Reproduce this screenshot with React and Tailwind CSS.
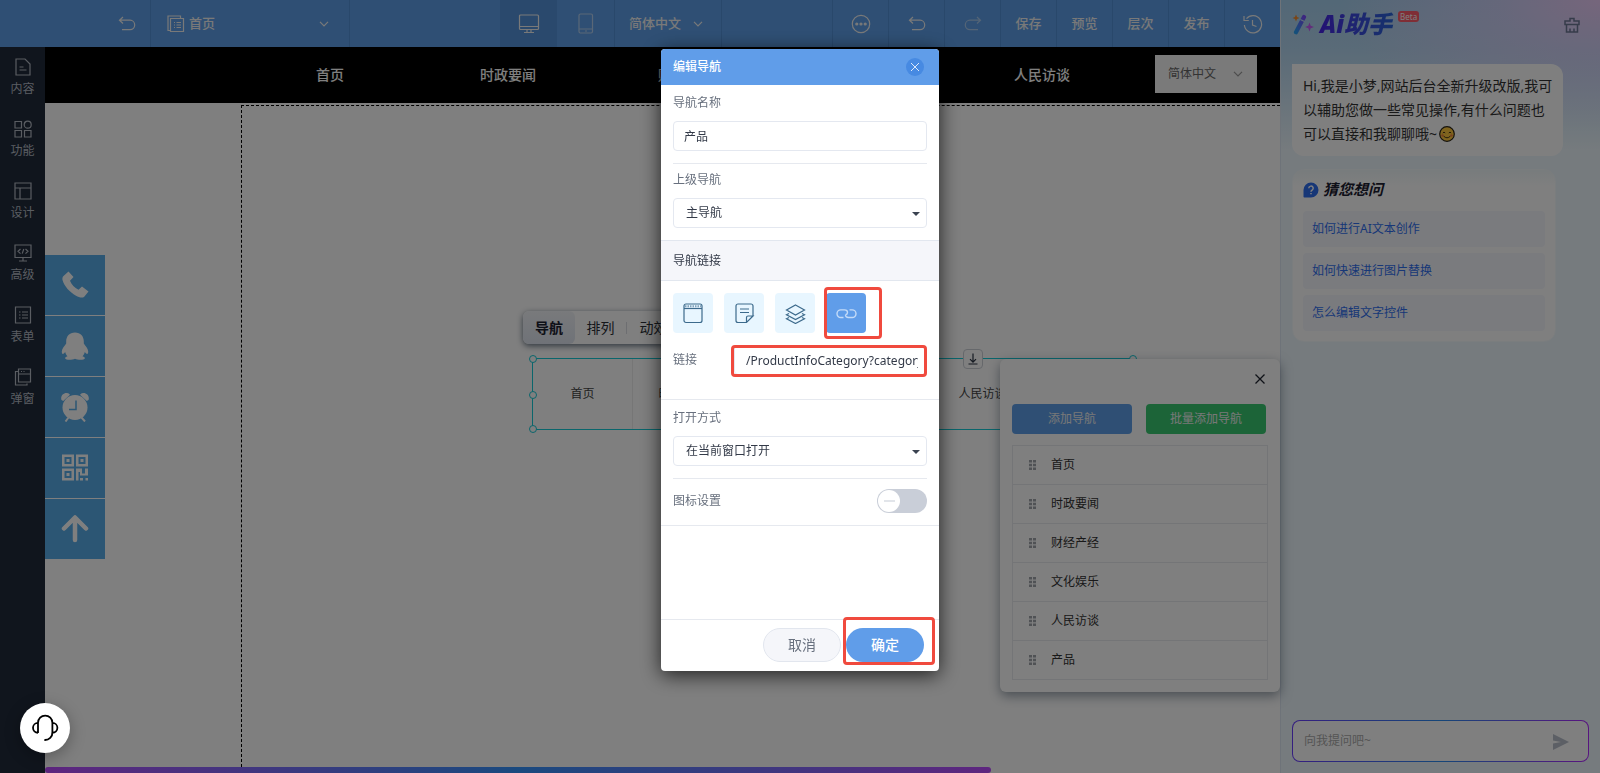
import { useState } from "react";
import clsx from "clsx";

const NAV_ITEMS = ["首页", "时政要闻", "财经产经", "文化娱乐", "人民访谈", "产品"];

const SIDE_ITEMS = [
  { label: "内容", icon: <path d="M2 1h9l5 5v11H2zM5.5 9h4M5.5 12h7" /> },
  { label: "功能", icon: <><path d="M1 1.5h6.5V8H1zM1 10.5h6.5V17H1zM10.5 10.5H17V17h-6.5z" /><circle cx="13.7" cy="4.7" r="3.5" /></> },
  { label: "设计", icon: <path d="M1 1h16v16H1zM1 6h16M6 6v11" /> },
  { label: "高级", icon: <path d="M1 1h16v12.5H1zM9 13.5V17M5 17h8M6.5 5 4 7.3l2.5 2.3M11.5 5 14 7.3l-2.5 2.3M9.8 5l-1.6 4.6" /> },
  { label: "表单", icon: <path d="M1.5 1h15v16h-15zM5 6h1.5M8 6h6M5 9h1.5M8 9h6M5 12h1.5M8 12h6" /> },
  { label: "弹窗", icon: <path d="M4.5 1h12v13h-12zM4.5 6h12M7 3.5h1M9.5 3.5h1M4 3.5H1.5V17H13v-1.5" /> },
];

const QUESTIONS = ["如何进行AI文本创作", "如何快速进行图片替换", "怎么编辑文字控件"];

function Icon({ size = 18, box = "0 0 18 18", className, children }) {
  return (
    <svg width={size} height={size} viewBox={box} fill="none" stroke="currentColor" strokeWidth="1.2" className={className} aria-hidden="true">
      {children}
    </svg>
  );
}

function Chevron({ className }) {
  return (
    <svg width="10" height="6" viewBox="0 0 10 6" fill="none" stroke="currentColor" strokeWidth="1.2" className={className} aria-hidden="true">
      <path d="M1 .8 5 4.8 9 .8" />
    </svg>
  );
}

const UNDO = <path d="M5 2 1.5 5.2 5 8.5M1.5 5.2H12a4.7 4.7 0 0 1 0 9.4H4" />;

function TopBar() {
  const cell = "w-14 h-full flex items-center justify-center border-r border-[#5290d6] text-[#f2f2f2]";
  return (
    <header className="h-[47px] shrink-0 flex bg-[#5e9fe8] text-[13px] font-medium text-[#f2f2f2]">
      <button aria-label="返回" className="w-[151px] flex items-center justify-end pr-3.5 border-r border-[#5290d6]"><Icon>{UNDO}</Icon></button>
      <label className="relative w-[199px] flex items-center border-r border-[#5290d6]">
        <Icon className="absolute left-4">
          <path d="M3.5 15.5H1V1h12.5v2M3.5 3.5h13v13h-13zM7 7.5h1M9.5 7.5H14M7 10h1M9.5 10H14M7 12.5h1M9.5 12.5H14" />
        </Icon>
        <select aria-label="页面" className="appearance-none w-full h-full bg-transparent pl-[38px] outline-none"><option>首页</option></select>
        <Chevron className="absolute right-5 pointer-events-none" />
      </label>

      <div className="flex ml-[150px]">
        <button aria-label="电脑" className="w-[57px] flex items-center justify-center bg-[#5593da]">
          <svg width="22" height="20" viewBox="0 0 22 20" fill="none" stroke="currentColor" strokeWidth="1.2">
            <rect x="1.5" y="1" width="19" height="14.5" rx="1" /><path d="M1.5 12.5h19M9 15.5V18M13 15.5V18M6 18.5h10" />
          </svg>
        </button>
        <button aria-label="手机" className="w-[58px] flex items-center justify-center border-r border-[#5290d6] text-[#b4cfee]">
          <svg width="16" height="21" viewBox="0 0 16 21" fill="none" stroke="currentColor" strokeWidth="1.2">
            <rect x="1" y="1" width="13.5" height="19" rx="1.5" /><path d="M1 16h13.5M7 18h2" />
          </svg>
        </button>
        <label className="relative w-[107px] flex items-center border-r border-[#5290d6]">
          <select aria-label="语言" className="appearance-none w-full h-full bg-transparent pl-3.5 outline-none"><option>简体中文</option></select>
          <Chevron className="absolute right-[18px] pointer-events-none" />
        </label>
      </div>

      <div className="flex ml-auto border-l border-[#5290d6]">
        <button aria-label="更多" className={cell}>
          <Icon size={20} box="0 0 20 20">
            <circle cx="10" cy="10" r="8.7" />
            <circle cx="5.8" cy="10" r="1" fill="currentColor" />
            <circle cx="10" cy="10" r="1" fill="currentColor" />
            <circle cx="14.2" cy="10" r="1" fill="currentColor" />
          </Icon>
        </button>
        <button aria-label="撤销" className={cell}><Icon>{UNDO}</Icon></button>
        <button aria-label="重做" className={cell}><Icon className="-scale-x-100 opacity-50">{UNDO}</Icon></button>
        {["保存", "预览", "层次", "发布"].map(t => <button key={t} className={cell}>{t}</button>)}
        <button aria-label="历史" className="w-[55px] flex items-center justify-center">
          <Icon size={20} box="0 0 20 20"><path d="M3.5 4.6A8.6 8.6 0 1 1 1.4 11M1 2v4.5h4.8M9.5 6v5l4 1.5" /></Icon>
        </button>
      </div>
    </header>
  );
}

function SideBar() {
  return (
    <nav className="w-[45px] shrink-0 bg-[#202a3a] text-[#b4bac4]">
      {SIDE_ITEMS.map(({ label, icon }) => (
        <button key={label} className="w-full h-[62px] pt-[11px] flex flex-col items-center gap-1 text-xs leading-[18px]">
          <Icon>{icon}</Icon>{label}
        </button>
      ))}
    </nav>
  );
}

const FLOATS = [
  { label: "电话", art: <path d="M2.5 5.5 7.5 1l5 5.5L9 10.3c1.5 4 4.5 7 8.5 9L21 16l6.500 5-4.500 5.500c-2 1-5 .5-8-1.300C8.500 21.500 3.500 16 1.500 9.500c-.3-1.500 0-3 1-4z" /> },
  { label: "QQ", art: <path d="M14 1C8.500 1 5.200 4.800 5.200 10v2C3.500 14.500 1 17 .8 20c0 1.500.4 2.500 1 2.500s1.600-1 2.400-2c.4 1.700 1 3 2.300 4.200C4.700 25.200 4 26 4.200 27c.3 1.700 7 1.700 9.800.3 2.800 1.400 9.500 1.400 9.800-.3.200-1-.5-1.800-2.300-2.300 1.300-1.200 1.900-2.500 2.300-4.200.8 1 1.800 2 2.400 2s1-1 1-2.500c-.2-3-2.700-5.500-4.400-8v-2C22.800 4.800 19.500 1 14 1z" /> },
  { label: "时间", art: <><path d="M.5 7.500C-.8 4 2 .2 6 .5c1.300.2 2.300.8 3 1.800L2.200 8.500zM27.500 7.500C28.800 4 26 .2 22 .5c-1.300.2-2.300.8-3 1.800l6.800 6.200z" /><circle cx="14" cy="15" r="12.5" /><path d="m7.500 25-3 4M20.500 25l3.500 4" stroke="#fff" strokeWidth="2" /><path d="M15 8v9H8" fill="none" stroke="#58ace8" strokeWidth="1.5" /></> },
  { label: "二维码", art: <path fillRule="evenodd" d="M1 1h12v12H1zM3.500 3.500v7h7v-7zM5.500 5.500h3v3h-3zM15 1h12v12H15zM17.500 3.500v7h7v-7zM19.500 5.500h3v3h-3zM1 15h12v12H1zM3.500 17.500v7h7v-7zM5.500 19.500h3v3h-3zM15 15h6v5h3v-5h3v7h-8v-3.500h-1.500V27H15zM19 24.500h3V27h-3zM24.500 24.500H27V27h-2.500z" /> },
  { label: "返回顶部", art: <path d="M3 14 14 3l11 11M14 3.500v22" fill="none" stroke="#fff" strokeWidth="4.5" strokeLinecap="round" strokeLinejoin="round" /> },
];

function FloatBar() {
  return (
    <div className="absolute left-0 top-[152px] flex flex-col gap-px">
      {FLOATS.map(({ label, art }) => (
        <button key={label} aria-label={label} className="size-15 pb-px flex items-center justify-center bg-[#58ace8]">
          <svg width="28" height="30" viewBox="0 0 28 29" fill="#fff">{art}</svg>
        </button>
      ))}
    </div>
  );
}

const HANDLES = [
  "-left-1 -top-1", "-left-1 top-8", "-left-1 -bottom-1",
  "-right-1 -top-1", "-right-1 top-8", "-right-1 -bottom-1",
];

function SelectedNav() {
  return (
    <>
      <div className="absolute left-[478px] top-[208px] w-52 h-[33px] flex items-center rounded-md bg-white text-sm text-[#2b2f36] shadow-[0_2px_6px_rgba(30,50,70,0.7)] overflow-hidden">
        <button className="w-[52px] h-full bg-gradient-to-b from-[#f2f4f8] to-[#dfe5f0] rounded-r-md font-bold text-[#1b2030]">导航</button>
        <button className="w-[51px]">排列</button>
        <button className="w-[54px] border-l border-[#dadde3] leading-3">动效</button>
      </div>
      <div className="absolute left-[487px] top-[255px] w-[602px] h-[72px] flex border border-[#14ccd8] text-xs text-[#444]">
        {NAV_ITEMS.map(n => (
          <span key={n} className="flex-1 flex items-center justify-center border-r border-[#ececec] last:border-r-0">{n}</span>
        ))}
        {HANDLES.map(pos => <i key={pos} className={clsx("absolute size-2 rounded-full border border-[#14ccd8] bg-white", pos)} />)}
        <button aria-label="下移" className="absolute left-[430px] -top-2.5 size-5 flex items-center justify-center rounded-sm border border-[#ccd0d6] bg-white text-[#2b3444]">
          <svg width="12" height="12" viewBox="0 0 12 12" fill="none" stroke="currentColor" strokeWidth="1.2"><path d="M6 .5V9M3 6.200 6 9.200l3-3M1.500 11h9" /></svg>
        </button>
      </div>
    </>
  );
}

function NavPanel() {
  return (
    <section className="absolute right-0 top-[256px] w-70 px-3 pb-3 rounded-md bg-white shadow-[0_4px_12px_rgba(40,60,80,0.5)]">
      <div className="h-[45px] pb-1.5 pr-0.5 flex items-center justify-end">
        <button aria-label="关闭面板" className="text-[#1f2430]">
          <svg width="12" height="12" viewBox="0 0 12 12" fill="none" stroke="currentColor" strokeWidth="1.3"><path d="m1.500 1.500 9 9M10.500 1.500l-9 9" /></svg>
        </button>
      </div>
      <div className="flex gap-3.5 pr-0.5 text-xs text-[#f0f0f0]">
        <button className="flex-1 h-[30px] rounded-sm bg-[#5e9fe8]">添加导航</button>
        <button className="flex-1 h-[30px] rounded-sm bg-[#38c970]">批量添加导航</button>
      </div>
      <ul className="mt-[11px] border border-[#e8eaee] text-xs text-[#333]">
        {NAV_ITEMS.map(n => (
          <li key={n} className="h-[39px] last:h-[38px] flex items-center gap-[15px] pl-4 border-b border-[#e8eaee] last:border-b-0">
            <svg width="7" height="10" viewBox="0 0 7 10" fill="#a0a4ab" aria-hidden="true"><path d="M0 0h3v2.500H0zM4 0h3v2.500H4zM0 3.700h3v2.600H0zM4 3.700h3v2.600H4zM0 7.500h3V10H0zM4 7.500h3V10H4z" /></svg>
            {n}
          </li>
        ))}
      </ul>
    </section>
  );
}

function Canvas() {
  return (
    <main className="flex-1 min-w-0 flex flex-col bg-white">
      <div className="h-14 shrink-0 flex items-center bg-black pl-[196px] pr-[23px]">
        <nav className="flex flex-1 mr-6 text-sm font-medium">
          {NAV_ITEMS.slice(0, 5).map(n => <a key={n} href="#" className="flex-1 text-center text-white">{n}</a>)}
        </nav>
        <label className="relative w-[102px] h-[38px] mb-0.5 flex items-center bg-[#f4f4f4] text-xs text-[#666]">
          <select aria-label="站点语言" className="appearance-none w-full h-full pl-[13px] outline-none"><option>简体中文</option></select>
          <Chevron className="absolute right-3.5 pointer-events-none text-[#999]" />
        </label>
      </div>
      <div className="relative flex-1 flex flex-col pt-0.5">
        <div className="flex-1 ml-[196px] border-t border-l border-dashed border-black" />
        <div className="h-1.5 w-[946px] rounded-full bg-[linear-gradient(90deg,#bd4cff,#3494ff_50%,#bd4cff)]" />
        <FloatBar />
        <SelectedNav />
        <NavPanel />
      </div>
    </main>
  );
}

function AiPanel() {
  return (
    <aside className="w-80 shrink-0 flex flex-col pl-[11px] border-l border-[#dce6f2] bg-[radial-gradient(ellipse_260px_130px_at_100%_0,#ecccf8_0,rgba(226,206,250,0.6)_40%,transparent_100%),linear-gradient(180deg,#a6d0ee_0,#b4d6f0_50px,#ecf6fc_150px)]">
      <div className="h-[47px] flex items-center pr-5">
        <svg width="22" height="22" viewBox="0 0 22 22" fill="none" aria-hidden="true">
          <defs><linearGradient id="wand" x1="0" y1="1" x2="1" y2="0"><stop stopColor="#2aa0f5" /><stop offset="1" stopColor="#7a4cff" /></linearGradient></defs>
          <path d="M4 19.200 12 4" stroke="url(#wand)" strokeWidth="4.2" strokeLinecap="round" />
          <path d="M8.300 6.500 12.500 8.500" stroke="#bfe0f5" strokeWidth="1.2" />
          <path d="M4 1.500 5 4l2.500 1L5 6 4 8.500 3 6 .5 5 3 4z" fill="#f58a2a" />
          <path d="m17.500 9.500 1.200 3.300 3.300 1.200-3.300 1.200-1.200 3.300-1.200-3.300-3.300-1.200 3.300-1.200z" fill="#c45af5" />
        </svg>
        <h1 className="pl-1.5 pr-1.5 text-[24px] leading-8 font-black italic text-transparent bg-clip-text bg-gradient-to-r from-[#4814e8] to-[#2868d8]">Ai助手</h1>
        <span className="self-start mt-[11px] px-0.5 rounded-[3px] bg-[#ff5c6c] text-[8px] leading-[11px] text-white">Beta</span>
        <button aria-label="清空" className="ml-auto mt-0.5 text-[#6c7894]">
          <Icon size={16} box="0 0 16 16"><path d="M1 4h5V1.500h4V4h5v3.500H1zM2.500 7.500V15h11V7.500M6 11.500V15M10 11.500V15" strokeWidth="1.5" /></Icon>
        </button>
      </div>

      <div className="mt-[17px] w-[271px] pl-[11px] pr-2 py-2.5 rounded-xl rounded-tl-none bg-white text-sm leading-6 text-[#333]">
        Hi,我是小梦,网站后台全新升级改版,我可以辅助您做一些常见操作,有什么问题也可以直接和我聊聊哦~
        <svg width="16" height="16" viewBox="0 0 16 16" className="inline-block ml-0.5 align-[-3px]" role="img" aria-label="微笑">
          <circle cx="8" cy="8" r="7.3" fill="#ffc83d" stroke="#2a2418" strokeWidth="1.2" />
          <path d="M3.800 7q1.200-1.800 2.400 0M9.800 7q1.200-1.800 2.400 0M4.500 10q3.500 3.600 7 0" fill="none" stroke="#4a3a18" strokeWidth="1" />
          <circle cx="3.5" cy="9.5" r="1.2" fill="#f0803c" /><circle cx="12.5" cy="9.5" r="1.2" fill="#f0803c" />
        </svg>
      </div>

      <section className="mt-[13px] w-[264px] p-2.5 rounded-xl border border-[#f4fafc] bg-gradient-to-b from-[#f0f8fa] to-white to-10%">
        <h2 className="h-[31px] pb-3 flex items-center gap-1 text-[15px] font-bold italic text-[#1c2030]">
          <svg width="16" height="16" viewBox="0 0 16 16" aria-hidden="true">
            <path d="M8 .5A7.500 7.500 0 1 1 8 15.500H1.200a.7.7 0 0 1-.7-.7V8A7.500 7.500 0 0 1 8 .5z" fill="#2f6fef" />
            <path d="M5.800 6.300a2.200 2.200 0 1 1 3.300 1.900c-.7.400-1.100.8-1.100 1.600M8 11v1.300" fill="none" stroke="#fff" strokeWidth="1.5" />
          </svg>
          猜您想问
        </h2>
        <div className="flex flex-col gap-1.5">
          {QUESTIONS.map(q => (
            <button key={q} className="h-9 pl-[9px] rounded bg-[#f5f6fc] text-left text-xs text-[#2f6fef]">{q}</button>
          ))}
        </div>
      </section>

      <div className="mt-auto mb-[11px] mr-[11px] p-px rounded-lg bg-[linear-gradient(90deg,#6a3cff,#2a8cf0_50%,#b028ff)]">
        <label className="h-10 flex items-center px-[11px] rounded-[7px] bg-white">
          <input aria-label="向我提问" placeholder="向我提问吧~" className="flex-1 min-w-0 text-xs placeholder:text-[#aaa] outline-none" />
          <button aria-label="发送" className="mt-0.5 mr-2">
            <svg width="16" height="16" viewBox="0 0 16 16"><path d="M0 0 16 8 0 16V9.500L8 8 0 6.500z" fill="#b8bfca" /></svg>
          </button>
        </label>
      </div>
    </aside>
  );
}

const LINK_TYPES = [
  { id: "page", label: "页面", art: <><rect x="1" y="1" width="18" height="18.5" rx="2" /><path d="M1 5.500h18" /><path d="M2 3.300h16" strokeWidth="2" strokeDasharray="1.500 1" opacity=".6" /></> },
  { id: "article", label: "文章", art: <path d="M19 13V3a2 2 0 0 0-2-2H4a2 2 0 0 0-2 2v14.500a2 2 0 0 0 2 2h8.500L19 13h-5a1.500 1.500 0 0 0-1.500 1.500v5M6 6h9M6 9.500h9" /> },
  { id: "category", label: "分类", art: <path d="m10.500 2 9 5-9 5-9-5zM4 10.500l-2.500 1.200 9 4.800 9-4.800-2.500-1.200M4 14.500l-2.500 1.200 9 4.800 9-4.800-2.500-1.200" /> },
  { id: "link", label: "外链", art: <path strokeWidth="1.4" d="M7.500 14.500H4.800a3.800 3.800 0 0 1 0-7.600h3.700c2.200 0 3 1 3 2.600 0 1.200-.7 2-2 2.300M13.500 6.900h2.700a3.800 3.800 0 0 1 0 7.600h-3.700c-2.200 0-3-1-3-2.700" /> },
];

function Field({ label, id, options }) {
  return (
    <>
      <label htmlFor={id} className="block leading-8 pb-0.5">{label}</label>
      <div className="relative">
        <select id={id} className="appearance-none block w-full h-[30px] px-3 rounded border border-[#e4e8f0] bg-white text-[#333a48] outline-none">
          {options.map(o => <option key={o}>{o}</option>)}
        </select>
        <svg width="8" height="4" viewBox="0 0 8 4" className="absolute right-[7px] top-3.5 pointer-events-none" aria-hidden="true"><path d="M0 0h8L4 4z" fill="#3a4250" /></svg>
      </div>
    </>
  );
}

// red outline used to point at a control
function Mark({ className }) {
  return <i className={clsx("absolute rounded-sm border-3 border-[#f04a3e] pointer-events-none", className)} />;
}

function EditNavDialog() {
  const [name, setName] = useState("产品");
  const [type, setType] = useState("link");
  const [url, setUrl] = useState("/ProductInfoCategory?categoryId=");
  const [withIcon, setWithIcon] = useState(false);

  return (
    <div role="dialog" aria-label="编辑导航" className="w-[278px] flex flex-col rounded bg-white text-xs text-[#68707e] shadow-[0_4px_20px_rgba(0,0,0,0.75)]">
      <div className="h-9 pl-3 pr-[15px] flex items-center justify-between rounded-t bg-[#609de9] text-white">
        <h2 className="font-medium">编辑导航</h2>
        <button aria-label="关闭" className="size-[18px] flex items-center justify-center rounded-full bg-[#478ae2]">
          <svg width="8" height="8" viewBox="0 0 8 8" fill="none" stroke="#dbe9fb" strokeWidth="1"><path d="m0 0 8 8M8 0 0 8" /></svg>
        </button>
      </div>

      <div className="mx-3 pb-3 border-b border-[#e6e9ef]">
        <label htmlFor="nav-name" className="block leading-9">导航名称</label>
        <input id="nav-name" value={name} onChange={e => setName(e.target.value)}
          className="block w-full h-[30px] px-2.5 rounded border border-[#e4e8f0] text-[#333a48] outline-none" />
      </div>
      <div className="px-3 pb-3">
        <Field id="nav-parent" label="上级导航" options={["主导航"]} />
      </div>

      <h3 className="h-[41px] px-3 leading-[39px] border-y border-[#e2e7ef] bg-[#f5f6fa] text-[#333a48]">导航链接</h3>
      <div className="px-3 pt-3 pb-6 border-b border-[#e6e9ef]">
        <div className="flex gap-[11px]">
          {LINK_TYPES.map(({ id, label, art }) => (
            <div key={id} className="relative">
              <button aria-label={label} onClick={() => setType(id)}
                className={clsx("size-10 flex items-center justify-center rounded", type === id ? "bg-[#609de9] text-[#c4dbf8]" : "bg-[#e8f6ff] text-[#3c6a8c]")}>
                <Icon size={21} box="0 0 21 21">{art}</Icon>
              </button>
              {id === "link" && <Mark className="-left-0.5 -top-1.5 w-[58px] h-[52px]" />}
            </div>
          ))}
        </div>
        <div className="relative mt-3 flex items-center justify-between">
          <label htmlFor="nav-url">链接</label>
          <input id="nav-url" value={url} onChange={e => setUrl(e.target.value)}
            className="w-[193px] h-[30px] pl-[11px] pr-2 rounded border border-[#e4e8f0] text-[#333a48] outline-none" />
          <Mark className="right-0 top-0 w-49 h-8" />
        </div>
      </div>

      <div className="px-3 pt-0.5">
        <Field id="nav-target" label="打开方式" options={["在当前窗口打开", "在新窗口打开"]} />
      </div>
      <div className="mx-3 mt-3 h-[47px] pb-0.5 flex items-center justify-between border-t border-[#e6e9ef]">
        <label htmlFor="nav-icon">图标设置</label>
        <label className="relative w-[50px] h-6 p-px rounded-full bg-[#c9ced8]">
          <input id="nav-icon" type="checkbox" checked={withIcon} onChange={e => setWithIcon(e.target.checked)} className="peer sr-only" />
          <span className="size-[22px] flex items-center justify-center rounded-full bg-white peer-checked:ml-auto"><i className="w-[11px] h-0.5 bg-[#e2e5ea]" /></span>
        </label>
      </div>
      <div className="h-[94px] border-t border-[#e6e9ef]" />

      <div className="h-[52px] pr-[15px] pb-0.5 flex items-center justify-end gap-[5px] border-t border-[#e6e9ef] text-sm">
        <button className="w-[78px] h-[34px] rounded-full border border-[#e2e6ee] bg-[#f5f6fa]">取消</button>
        <div className="relative">
          <button className="w-[78px] h-[34px] rounded-full bg-[#609de9] font-medium text-white">确定</button>
          <Mark className="-left-[3px] -top-[11px] w-[92px] h-12" />
        </div>
      </div>
    </div>
  );
}

export default function App() {
  return (
    <div className="relative h-screen flex overflow-hidden font-['Noto_Sans','Noto_Sans_CJK_SC',sans-serif]">
      <div className="flex-1 min-w-0 flex flex-col">
        <TopBar />
        <div className="flex-1 flex min-h-0">
          <SideBar />
          <Canvas />
        </div>
      </div>
      <AiPanel />

      <div className="fixed inset-0 flex items-start justify-center pt-[49px] bg-black/50">
        <EditNavDialog />
      </div>
      <button aria-label="在线客服" className="fixed left-5 bottom-5 size-[50px] flex items-center justify-center rounded-full bg-white shadow-[0_4px_16px_rgba(0,0,0,0.3)]">
        <svg width="28" height="28" viewBox="0 0 28 28" fill="none" stroke="#000" strokeWidth="1.8" aria-hidden="true">
          <path d="M7 19V8.800a7.200 7.200 0 0 1 14.400 0V18a7.500 7.500 0 0 1-8 8M7 8.800a5 5 0 0 0 0 10M21.400 8.800a5 5 0 0 1 0 10" />
        </svg>
      </button>
    </div>
  );
}
